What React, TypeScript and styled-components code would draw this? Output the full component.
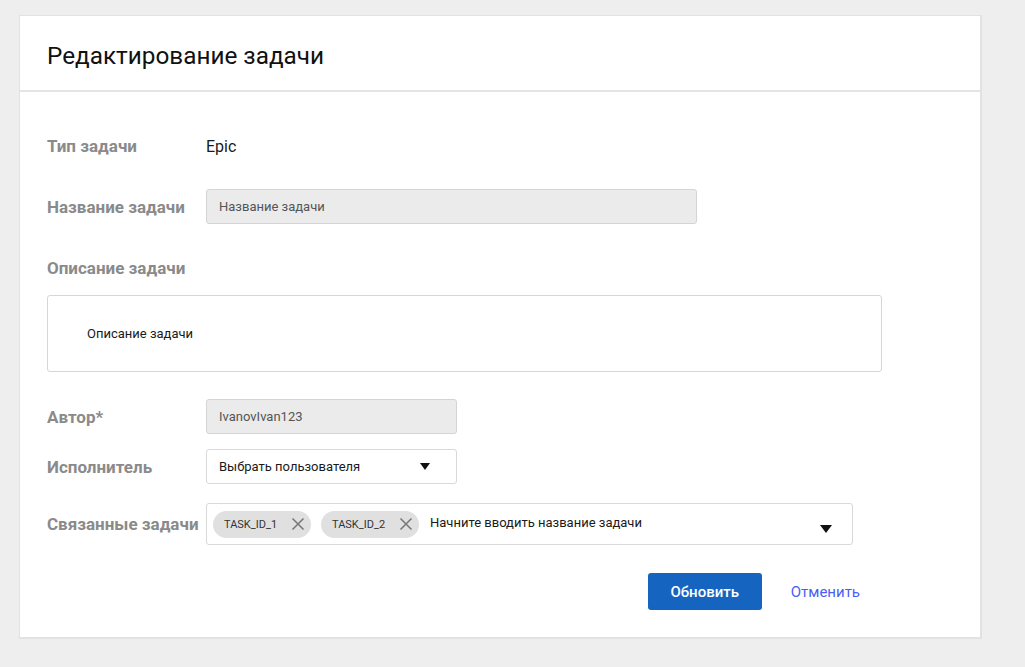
import React from "react";
import styled, { createGlobalStyle } from "styled-components";

const GlobalStyle = createGlobalStyle`
  html, body {
    margin: 0;
    padding: 0;
    background: #eeeeee;
    font-family: Roboto, "Noto Sans", "Liberation Sans", sans-serif;
  }
  body {
    padding: 15px 0 0 19px;
  }
`;

const Card = styled.div`
  box-sizing: border-box;
  width: 963px;
  height: 624px;
  background: #fff;
  border: 2px solid #e2e2e2;
  border-top-width: 1px;
  border-left-width: 1px;
  display: flex;
  flex-direction: column;
`;

const Header = styled.div`
  box-sizing: border-box;
  height: 76px;
  padding: 0 27px;
  display: flex;
  align-items: center;
  border-bottom: 2px solid #e4e4e4;

  h1 {
    margin: 4px 0 0;
    font-size: 24.3px;
    font-weight: 400;
    color: #111;
  }
`;

const Body = styled.div`
  padding: 37px 0 0 27px;
  display: flex;
  flex-direction: column;
`;

const Row = styled.div<{ $mt?: number; $h?: number }>`
  display: flex;
  align-items: center;
  min-height: ${(p) => p.$h ?? 34}px;
  margin-top: ${(p) => p.$mt ?? 0}px;
`;

const Label = styled.div`
  width: 159px;
  flex-shrink: 0;
  font-size: 17px;
  font-weight: 700;
  color: #8a8a8a;
`;

const Value = styled.div`
  font-size: 16px;
  color: #1a1a1a;
`;

const Field = styled.div<{ $w: number; $disabled?: boolean; $h?: number }>`
  box-sizing: border-box;
  width: ${(p) => p.$w}px;
  height: ${(p) => p.$h ?? 35}px;
  padding: 0 12px;
  display: flex;
  align-items: center;
  border: 1px solid ${(p) => (p.$disabled ? "#d4d4d4" : "#d9d9d9")};
  border-radius: 3px;
  background: ${(p) => (p.$disabled ? "#ebebeb" : "#fff")};
  font-size: 13px;
  color: ${(p) => (p.$disabled ? "#555" : "#1a1a1a")};
`;

const TextArea = styled.div`
  box-sizing: border-box;
  width: 835px;
  height: 77px;
  margin-top: 10px;
  padding: 0 39px;
  display: flex;
  align-items: center;
  border: 1px solid #d6d6d6;
  border-radius: 3px;
  font-size: 13px;
  color: #1a1a1a;
`;

const SelectText = styled.span`
  flex: 1;
`;

const Caret = styled.span<{ $size: number }>`
  display: block;
  width: 0;
  height: 0;
  border-left: ${(p) => p.$size}px solid transparent;
  border-right: ${(p) => p.$size}px solid transparent;
  border-top: ${(p) => Math.round(p.$size * 1.35)}px solid #111;
`;

const MultiField = styled.div`
  box-sizing: border-box;
  width: 647px;
  height: 42px;
  padding: 0 20px 0 6px;
  display: flex;
  align-items: center;
  gap: 10px;
  border: 1px solid #d9d9d9;
  border-radius: 3px;
  font-size: 13px;
  color: #1a1a1a;
`;

const Chip = styled.div`
  box-sizing: border-box;
  width: 98px;
  height: 27px;
  padding: 0 6px 0 11px;
  display: flex;
  align-items: center;
  justify-content: space-between;
  border-radius: 14px;
  background: #e0e0e0;
  font-size: 11px;
  color: #333;
`;

const Placeholder = styled.span`
  flex: 1;
  margin-top: -4px;
  margin-left: 1px;
`;

const CaretLow = styled.div`
  align-self: flex-end;
  margin-bottom: 11px;
`;

const Actions = styled.div`
  width: 835px;
  margin-top: 28px;
  display: flex;
  justify-content: flex-end;
  align-items: center;
  gap: 7px;
`;

const PrimaryButton = styled.button`
  width: 114px;
  height: 37px;
  border: none;
  border-radius: 3px;
  background: #1565c0;
  color: #fff;
  font-family: inherit;
  font-size: 15px;
  font-weight: 500;
`;

const LinkButton = styled.button`
  height: 37px;
  padding: 0 22px;
  border: none;
  background: transparent;
  color: #4a5ff5;
  font-family: inherit;
  font-size: 15px;
`;

const CloseIcon = () => (
  <svg width="14" height="14" viewBox="0 0 14 14">
    <path d="M1.5 1.5 L12.5 12.5 M12.5 1.5 L1.5 12.5" stroke="#7a7a7a" strokeWidth="1.6" />
  </svg>
);

export default function App() {
  return (
    <>
      <GlobalStyle />
      <Card>
        <Header>
          <h1>Редактирование задачи</h1>
        </Header>
        <Body>
          <Row>
            <Label>Тип задачи</Label>
            <Value>Epic</Value>
          </Row>
          <Row $mt={26}>
            <Label>Название задачи</Label>
            <Field $w={491} $disabled>Название задачи</Field>
          </Row>
          <Row $mt={27}>
            <Label>Описание задачи</Label>
          </Row>
          <TextArea>Описание задачи</TextArea>
          <Row $mt={27}>
            <Label>Автор*</Label>
            <Field $w={251} $disabled>IvanovIvan123</Field>
          </Row>
          <Row $mt={15}>
            <Label>Исполнитель</Label>
            <Field $w={251}>
              <SelectText>Выбрать пользователя</SelectText>
              <Caret $size={5} style={{ marginRight: 14 }} />
            </Field>
          </Row>
          <Row $mt={19} $h={42}>
            <Label>Связанные задачи</Label>
            <MultiField>
              <Chip>
                TASK_ID_1
                <CloseIcon />
              </Chip>
              <Chip>
                TASK_ID_2
                <CloseIcon />
              </Chip>
              <Placeholder>Начните вводить название задачи</Placeholder>
              <CaretLow>
                <Caret $size={6} />
              </CaretLow>
            </MultiField>
          </Row>
          <Actions>
            <PrimaryButton>Обновить</PrimaryButton>
            <LinkButton>Отменить</LinkButton>
          </Actions>
        </Body>
      </Card>
    </>
  );
}
